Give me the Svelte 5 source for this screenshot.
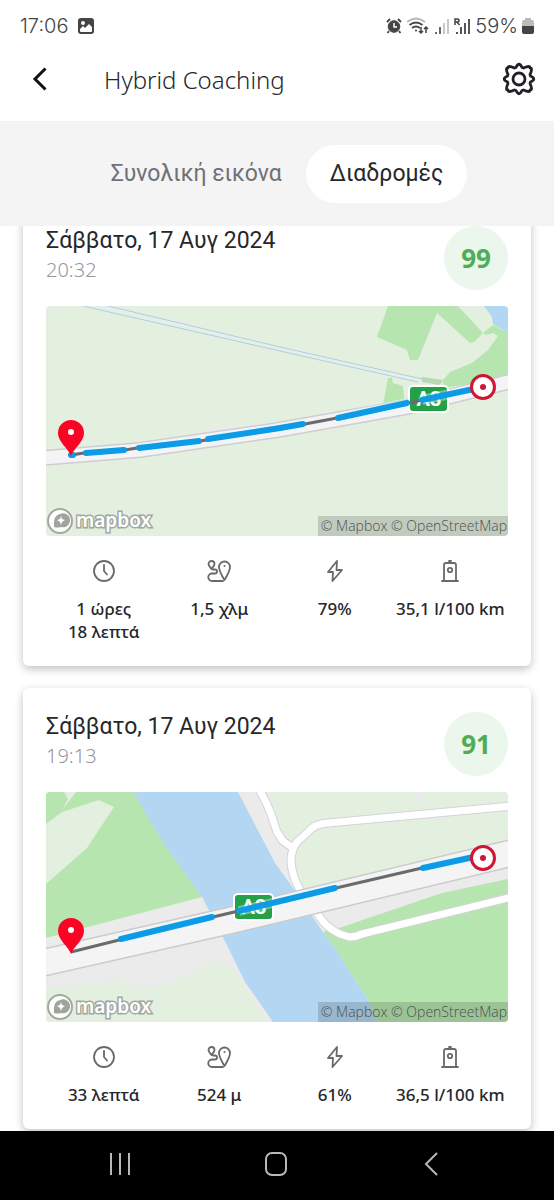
<script lang="ts">
  type Point = [number, number];

  interface Trip {
    id: number;
    date: string;
    time: string;
    score: number;
    map: 'plain' | 'river';
    shield: Point;
    start: Point;
    end: Point;
    route: string;
    electric: string[];
    stats: { icon: 'clock' | 'distance' | 'bolt' | 'fuel'; label: string; lines: string[] }[];
  }

  const trips: Trip[] = [
    {
      id: 1,
      date: 'Σάββατο, 17 Αυγ 2024',
      time: '20:32',
      score: 99,
      map: 'plain',
      shield: [363, 80],
      start: [25, 150],
      end: [437, 81],
      route: 'M25 149 38 147 79 144 91 142 154 135 234 123 259 118 291 112 362 97 437 81',
      electric: [
        'M25 149H27',
        'M40 147 78 144',
        'M93 142 153 135',
        'M162 133 234 122 257 118',
        'M292 112 361 97',
        'M376 94 437 81'
      ],
      stats: [
        { icon: 'clock', label: 'Διάρκεια', lines: ['1 ώρες', '18 λεπτά'] },
        { icon: 'distance', label: 'Απόσταση', lines: ['1,5 χλμ'] },
        { icon: 'bolt', label: 'Ηλεκτρική οδήγηση', lines: ['79%'] },
        { icon: 'fuel', label: 'Κατανάλωση', lines: ['35,1 l/100 km'] }
      ]
    },
    {
      id: 2,
      date: 'Σάββατο, 17 Αυγ 2024',
      time: '19:13',
      score: 91,
      map: 'river',
      shield: [188, 102],
      start: [25, 162],
      end: [437, 66],
      route: 'M25 160 73 148 167 125 290 96 376 76 437 63',
      electric: ['M75 147 166 125', 'M193 119 289 96', 'M377 76 437 63'],
      stats: [
        { icon: 'clock', label: 'Διάρκεια', lines: ['33 λεπτά'] },
        { icon: 'distance', label: 'Απόσταση', lines: ['524 μ'] },
        { icon: 'bolt', label: 'Ηλεκτρική οδήγηση', lines: ['61%'] },
        { icon: 'fuel', label: 'Κατανάλωση', lines: ['36,5 l/100 km'] }
      ]
    }
  ];

  const loopRoad =
    'M212-4Q220 8 225 22L231 40 237 49 247 56M466 14 282 31Q268 32 262 40L252 49Q245 56 245 70 246 84 254 98L271 121Q283 141 304 145 310 145 316 142L466 105';

  let activeTab = $state('trips');
</script>

<div class="screen">
  <div class="status-bar">
    <div class="status-group">
      <span>17:06</span>
      <svg width="16" height="16" viewBox="0 0 16 16" aria-hidden="true">
        <rect width="16" height="16" rx="3" fill="#444" />
        <circle cx="5" cy="5" r="2" fill="#fff" />
        <path d="M2 11 5 8 7 10 11 6 14 9V13Q14 14 13 14H3Q2 14 2 13Z" fill="#fff" />
      </svg>
    </div>
    <div class="status-group right">
      <svg width="16" height="16" viewBox="0 0 16 16" fill="#444" stroke="#444" aria-hidden="true">
        <circle cx="8" cy="8.500" r="5.800" />
        <path d="M1 4 4 1M12 1 15 4M3 13 1.500 15M13 13 14.500 15" fill="none" stroke-width="1.800" />
        <path d="M8 5V9H11" fill="none" stroke="#fff" stroke-width="1.500" />
      </svg>
      <svg width="24" height="18" viewBox="0 0 24 18" fill="none" stroke="#444" stroke-width="1.800" aria-hidden="true">
        <path d="M1 5Q10-2 19 5" stroke="#b5b5b5" />
        <path d="M3.500 8Q10 3 16.500 8M6 11Q10 8 14 11" />
        <circle cx="10" cy="13.500" r="1" fill="#444" stroke="none" />
        <path d="M15 10V16M13 14 15 16 17 14M20 16V10M18 12 20 10 22 12" stroke-width="1.500" />
      </svg>
      <svg width="16" height="16" viewBox="0 0 16 16" aria-hidden="true">
        <path d="M2 16V14M6 16V9" stroke="#444" stroke-width="1.600" />
        <path d="M10 16V5M14 16V1" stroke="#bbb" stroke-width="1.600" />
      </svg>
      <svg width="17" height="16" viewBox="0 0 17 16" fill="none" stroke="#444" aria-hidden="true">
        <path d="M3 16V14M7 16V9M11 16V5M15 16V1" stroke-width="1.800" />
        <path d="M1 7V1H3Q5 1 5 2.500 5 4 3 4H1M3 4 5.500 7" stroke-width="1.500" />
      </svg>
      <span>59%</span>
      <svg width="12" height="16" viewBox="0 0 12 16" aria-hidden="true">
        <path d="M3 0H9V2H10Q12 2 12 4V8H0V4Q0 2 2 2H3Z" fill="#bbb" />
        <path d="M0 8H12V14Q12 16 10 16H2Q0 16 0 14Z" fill="#444" />
      </svg>
    </div>
  </div>

  <header class="app-bar">
    <button class="icon-btn" aria-label="Πίσω">
      <svg width="32" height="32" viewBox="0 0 32 32" fill="none" stroke="#111" stroke-width="3">
        <path d="M21.500 5.500 11 16 21.500 26.500" />
      </svg>
    </button>
    <h1>Hybrid Coaching</h1>
    <button class="icon-btn" aria-label="Ρυθμίσεις">
      <svg width="34" height="34" viewBox="0 0 34 34" fill="none" stroke="#1f2124" stroke-width="2.800" stroke-linejoin="round">
        <circle cx="17" cy="17" r="6" />
        <path
          d="M14 5.500Q17-1 20 5.500L21.500 6Q28 3 28 6 31 6 28 12.500L28.500 14Q35 17 28.500 20L28 21.500Q31 28 28 28 28 31 21.500 28L20 28.500Q17 35 14 28.500L12.500 28Q6 31 6 28 3 28 6 21.500L5.500 20Q-1 17 5.500 14L6 12.500Q3 6 6 6 6 3 12.500 6Z"
        />
      </svg>
    </button>
  </header>

  <div class="tabs" role="tablist">
    <button role="tab" class:active={activeTab === 'overview'} aria-selected={activeTab === 'overview'} onclick={() => (activeTab = 'overview')}>
      Συνολική εικόνα
    </button>
    <button role="tab" class:active={activeTab === 'trips'} aria-selected={activeTab === 'trips'} onclick={() => (activeTab = 'trips')}>
      Διαδρομές
    </button>
  </div>

  <main class="trip-list">
    {#each trips as trip (trip.id)}
      <article class="card">
        <div class="card-head">
          <div>
            <h2>{trip.date}</h2>
            <time>{trip.time}</time>
          </div>
          <div class="score">{trip.score}</div>
        </div>

        <div class="map">
          <svg viewBox="0 0 462 230" fill="none" role="img" aria-label="Χάρτης διαδρομής">
            {#if trip.map === 'plain'}
              <rect width="462" height="230" fill="#e3efdf" />
              <path d="M37 0H62L234 41 376 73 372 76 234 45Z" fill="#e2f0ea" />
              <path d="M62 0 234 41 376 73M37 0 234 45 372 76" stroke="#b3cde0" />
              <path d="M342 0 331 31 361 44 364 54H372L391 7 424 37 428 36 437 27 412 0Z" fill="#b7e5af" />
              <path d="M437 27 447 19 462 27V72L397 82V74L404 66 426 57 442 44 452 30 447 27 440 29Z" fill="#b7e5af" />
              <path d="M342 72H346L347 77 357 80 359 100 336 104Z" fill="#b7e5af" />
              <path d="M376 71 397 74 394 79 376 76Z" fill="#b8d8b4" />
              <path d="M438 0 446 11 447 18 462 27V0Z" fill="#b3d7f2" />
              <path d="M144 129 165 121 234 115 232 122 144 137Z" fill="#ebebe9" />
              <path d="M-4 152 94 144 232 124 362 101 466 75" stroke="#cfcdcf" stroke-width="16" />
              <path d="M-4 152 94 144 232 124 362 101 466 75" stroke="#f4f3f5" stroke-width="13" />
            {:else}
              <rect width="462" height="230" fill="#ebebeb" />
              <path d="M0 0H87L156 105 0 146Z" fill="#b7e5af" />
              <path d="M0 32 16 20 53 8 68 15 41 56 0 92Z" fill="#e3efdf" />
              <path d="M18 0 22 7 16 18 30 0Z" fill="#e3efdf" />
              <path d="M87 0H192L229 71 247 96 277 140 289 156 322 208 331 230H227L199 190 176 143 156 105 120 55Z" fill="#b3d7f2" />
              <path d="M0 197 71 188 101 198 124 191 174 168 187 175 222 230H0Z" fill="#e3efdf" />
              <path d="M220 0H462V55L252 99 245 70 247 56 234 40Z" fill="#e3efdf" />
              <path d="M371 0 376 14" stroke="#ebebeb" stroke-width="5" />
              <path d="M277 140 296 135 396 101 462 87V230H331L322 208 289 156Z" fill="#b7e5af" />
              <path d={loopRoad} stroke="#d5d3d8" stroke-width="9" stroke-linejoin="round" />
              <path d={loopRoad} stroke="#fff" stroke-width="7" stroke-linejoin="round" />
              <path d="M-4 171 182 129 466 61" stroke="#cbcbcd" stroke-width="28" />
              <path d="M-4 171 182 129 466 61" stroke="#f4f4f4" stroke-width="25" />
            {/if}

            <g transform="translate({trip.shield[0]} {trip.shield[1]})">
              <rect width="39" height="26" rx="4" fill="#24a148" stroke="#fff" stroke-width="2" />
              <text class="shield-text" x="20" y="20" text-anchor="middle">A3</text>
            </g>

            {#each trip.electric as segment}
              <path d={segment} stroke="#e3fbff" stroke-width="10" opacity="0.4" />
            {/each}
            <path d={trip.route} stroke="#6a6a6e" stroke-width="3" />
            {#each trip.electric as segment}
              <path d={segment} stroke="#0d9be5" stroke-width="6" stroke-linecap="round" />
            {/each}

            <g transform="translate({trip.start[0]} {trip.start[1]})">
              <path d="M0 0C-3-8-13-14-13-23A13 13 0 0 1 13-23C13-14 3-8 0 0Z" fill="#fb0324" />
              <circle cy="-24" r="3" fill="#fff" />
            </g>
            <g transform="translate({trip.end[0]} {trip.end[1]})">
              <circle r="11.500" fill="#fff" stroke="#d01535" stroke-width="3" />
              <circle r="3" fill="#d01535" />
            </g>

            <g>
              <circle cx="14" cy="215" r="12" fill="#fff" stroke="#a2a8a0" stroke-width="2" />
              <path d="M8 221Q7 209 14 208A7 7 0 1 1 15 221Q12 222 8 221Z" fill="#9da59c" />
              <path d="M15 210 16 213 19 214 16 216 15 219 14 216 11 214 14 213Z" fill="#fff" />
              <text class="logo-text" x="30" y="221">mapbox</text>
            </g>
          </svg>
          <div class="attribution">
            <a href="#mapbox">© Mapbox</a>
            <a href="#openstreetmap">© OpenStreetMap</a>
          </div>
        </div>

        <ul class="stats">
          {#each trip.stats as stat}
            <li>
              <svg width="24" height="24" viewBox="0 0 24 24" fill="none" stroke="#696a6d" stroke-width="1.800" stroke-linecap="round" stroke-linejoin="round" role="img" aria-label={stat.label}>
                {#if stat.icon === 'clock'}
                  <circle cx="12" cy="11" r="10" />
                  <path d="M12 5V11L15 14.500" />
                {:else if stat.icon === 'distance'}
                  <path d="M4.500 9C2.500 6.500 1.500 5.500 1.500 4A3 3 0 0 1 7.500 4C7.500 5.500 6.500 6.500 4.500 9ZM6 9.500H8A2 2 0 0 1 8 13.500H5A3.500 3.500 0 0 0 5 21H16" />
                  <path d="M17.500 20C14.500 15 12 11 12 7A5.500 5.500 0 0 1 23 7C23 11 20.500 15 17.500 20Z" />
                  <circle cx="17.500" cy="6" r="1" fill="#696a6d" stroke="none" />
                {:else if stat.icon === 'bolt'}
                  <path d="M14 1 5 12H10L9.500 21 19 10H13.500Z" />
                {:else}
                  <path d="M4 21H20M6 21V5Q6 3 8 3H16Q18 3 18 5V21M11 1H13" />
                  <circle cx="12" cy="10" r="2.200" />
                {/if}
              </svg>
              <p>
                {#each stat.lines as line}
                  <span>{line}</span>
                {/each}
              </p>
            </li>
          {/each}
        </ul>
      </article>
    {/each}
  </main>

  <nav class="system-nav">
    <button aria-label="Πρόσφατα">
      <svg width="24" height="24" viewBox="0 0 24 24" fill="none" stroke="#b8b8b8" stroke-width="2">
        <path d="M3 1V23M12 1V23M21 1V23" />
      </svg>
    </button>
    <button aria-label="Αρχική">
      <svg width="24" height="24" viewBox="0 0 24 24" fill="none" stroke="#b8b8b8" stroke-width="2">
        <rect x="2" y="1" width="20" height="22" rx="6" />
      </svg>
    </button>
    <button aria-label="Πίσω">
      <svg width="24" height="24" viewBox="0 0 24 24" fill="none" stroke="#b8b8b8" stroke-width="2">
        <path d="M18 1 7 12 18 23" />
      </svg>
    </button>
  </nav>
</div>

<style>
  :global(body) {
    margin: 0;
    background: #fff;
  }

  .screen {
    display: flex;
    flex-direction: column;
    min-height: 100vh;
    font-family: "Noto Sans", "Open Sans", sans-serif;
    color: #26272b;
  }

  button {
    border: none;
    padding: 0;
    background: none;
    font: inherit;
    color: inherit;
    cursor: pointer;
  }

  svg {
    display: block;
    flex: none;
  }

  .status-bar {
    display: flex;
    justify-content: space-between;
    align-items: center;
    height: 52px;
    padding: 0 20px;
    font-family: Inter, sans-serif;
    font-size: 20px;
    font-weight: 300;
    color: #444;
  }

  .status-group {
    display: flex;
    align-items: center;
    gap: 10px;
  }

  .status-group.right {
    gap: 4px;
  }

  .app-bar {
    display: flex;
    align-items: center;
    height: 54px;
    padding: 0 18px 15px 24px;
  }

  .icon-btn {
    flex: none;
  }

  h1 {
    flex: 1;
    margin: 0 0 0 48px;
    font-size: 24px;
    font-weight: 300;
  }

  .tabs {
    display: flex;
    justify-content: center;
    align-items: center;
    height: 105px;
    background: #f4f4f4;
    font-family: Roboto, sans-serif;
    font-size: 23px;
  }

  .tabs button {
    padding: 15px 24px;
    border-radius: 29px;
    line-height: 28px;
    color: #707176;
  }

  .tabs button.active {
    background: #fff;
    color: #26272b;
  }

  .trip-list {
    display: flex;
    flex: 1;
    flex-direction: column;
    gap: 22px;
    overflow: hidden;
    padding: 0 23px 2px;
  }

  .card {
    padding: 24px 23px 23px;
    border-radius: 6px;
    background: #fff;
    box-shadow: 0 3px 8px rgba(0, 0, 0, 0.25);
  }

  /* the list is scrolled so the first card starts under the tabs */
  .card:first-child {
    margin-top: -24px;
  }

  .card-head {
    display: flex;
    justify-content: space-between;
    margin-bottom: 16px;
  }

  h2 {
    margin: 0;
    font-family: Roboto, sans-serif;
    font-size: 23px;
    font-weight: 400;
    line-height: 30px;
  }

  time {
    display: block;
    font-size: 20px;
    font-weight: 300;
    line-height: 28px;
    color: #98989c;
  }

  .score {
    display: flex;
    align-items: center;
    justify-content: center;
    width: 64px;
    height: 64px;
    border-radius: 50%;
    background: #ebf6ec;
    font-size: 26px;
    font-weight: 700;
    line-height: 30px;
    color: #4ead55;
  }

  .map {
    position: relative;
    overflow: hidden;
    border-radius: 4px;
  }

  .map svg {
    width: 100%;
    height: auto;
  }

  .shield-text {
    fill: #fff;
    font-family: Roboto, sans-serif;
    font-size: 20px;
    font-weight: 700;
  }

  .logo-text {
    fill: #fff;
    stroke: #a2a8a0;
    stroke-width: 3px;
    paint-order: stroke;
    font-family: "Noto Sans", sans-serif;
    font-size: 19px;
    font-weight: 600;
  }

  .attribution {
    position: absolute;
    right: 0;
    bottom: 0;
    padding: 0 1px 0 3px;
    background: rgba(0, 0, 0, 0.15);
    font-family: "Open Sans", sans-serif;
    font-size: 14px;
    line-height: 20px;
    white-space: nowrap;
  }

  .attribution a {
    color: #4c4f50;
    font-weight: 300;
    text-decoration: none;
  }

  .stats {
    display: grid;
    grid-template-columns: repeat(4, 1fr);
    margin: 24px 0 0;
    padding: 0;
    list-style: none;
  }

  .stats li {
    display: flex;
    flex-direction: column;
    align-items: center;
    gap: 13px;
  }

  .stats p {
    margin: 0;
    font-size: 17px;
    font-weight: 500;
    line-height: 23px;
    text-align: center;
    white-space: nowrap;
  }

  .stats span {
    display: block;
  }

  .system-nav {
    display: flex;
    justify-content: space-between;
    align-items: center;
    height: 65px;
    padding: 0 111px 4px 108px;
    background: #000;
  }
</style>
